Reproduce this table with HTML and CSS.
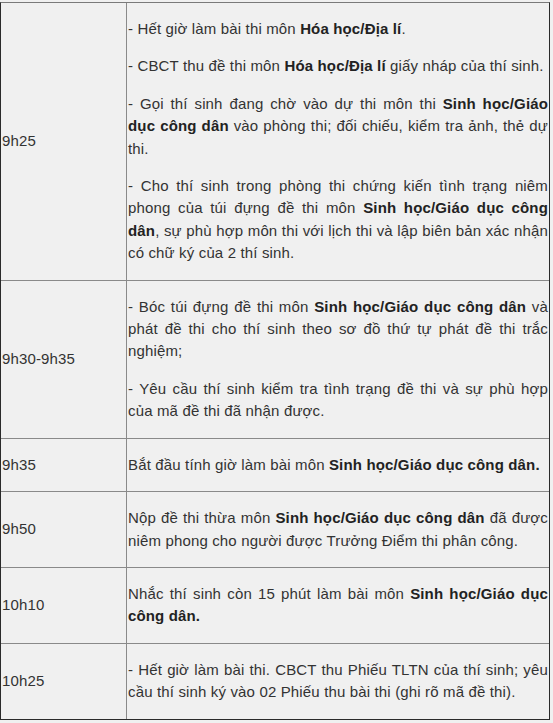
FILE: index.html
```html
<!DOCTYPE html>
<html lang="vi">
<head>
<meta charset="utf-8">
<link rel="stylesheet" href="styles.css">
</head>
<body>
<div class="page">
<table class="schedule">
  <tr>
    <td class="time">9h25</td>
    <td class="desc">
      <p>- Hết giờ làm bài thi môn <b>Hóa học/Địa lí</b>.</p>
      <p>- CBCT thu đề thi môn <b>Hóa học/Địa lí</b> giấy nháp của thí sinh.</p>
      <p>- Gọi thí sinh đang chờ vào dự thi môn thi <b>Sinh học/Giáo dục công dân</b> vào phòng thi; đối chiếu, kiểm tra ảnh, thẻ dự thi.</p>
      <p>- Cho thí sinh trong phòng thi chứng kiến tình trạng niêm phong của túi đựng đề thi môn <b>Sinh học/Giáo dục công dân</b>, sự phù hợp môn thi với lịch thi và lập biên bản xác nhận có chữ ký của 2 thí sinh.</p>
    </td>
  </tr>
  <tr>
    <td class="time">9h30-9h35</td>
    <td class="desc">
      <p>- Bóc túi đựng đề thi môn <b>Sinh học/Giáo dục công dân</b> và phát đề thi cho thí sinh theo sơ đồ thứ tự phát đề thi trắc nghiệm;</p>
      <p>- Yêu cầu thí sinh kiểm tra tình trạng đề thi và sự phù hợp của mã đề thi đã nhận được.</p>
    </td>
  </tr>
  <tr>
    <td class="time">9h35</td>
    <td class="desc">
      <p>Bắt đầu tính giờ làm bài môn <b>Sinh học/Giáo dục công dân.</b></p>
    </td>
  </tr>
  <tr>
    <td class="time">9h50</td>
    <td class="desc">
      <p>Nộp đề thi thừa môn <b>Sinh học/Giáo dục công dân</b> đã được niêm phong cho người được Trưởng Điểm thi phân công.</p>
    </td>
  </tr>
  <tr>
    <td class="time">10h10</td>
    <td class="desc">
      <p>Nhắc thí sinh còn 15 phút làm bài môn <b>Sinh học/Giáo dục công dân.</b></p>
    </td>
  </tr>
  <tr class="last">
    <td class="time">10h25</td>
    <td class="desc">
      <p>- Hết giờ làm bài thi. CBCT thu Phiếu TLTN của thí sinh; yêu cầu thí sinh ký vào 02 Phiếu thu bài thi (ghi rõ mã đề thi).</p>
    </td>
  </tr>
</table>
</div>
</body>
</html>
```

FILE: styles.css
```css
html, body {
  margin: 0;
  padding: 0;
  background: #f0f0f0;
}
.page {
  padding-top: 2px;
  font-family: "Liberation Sans", Arial, sans-serif;
  font-size: 15px;
  letter-spacing: 0.15px;
  line-height: 22.4px;
  color: #333;
}
.schedule {
  width: 550px;
  border-collapse: separate;
  border-spacing: 0;
  border-top: 1px solid #7a7a7a;
  border-left: 1px solid #2a2a2a;
  border-right: 1px solid #2a2a2a;
  border-bottom: 1px solid #2a2a2a;
}
.schedule td {
  padding: 0 1px;
  border-bottom: 1px solid #8a8a8a;
}
.schedule tr.last td {
  border-bottom: none;
}
.time {
  width: 123px;
  vertical-align: middle;
  border-right: 1px solid #8a8a8a;
  white-space: nowrap;
}
.desc {
  vertical-align: middle;
  text-align: justify;
}
.desc p {
  margin: 15px 0;
}
.desc p + p {
  margin-top: 14px;
}
.desc b {
  color: #222;
}
```
